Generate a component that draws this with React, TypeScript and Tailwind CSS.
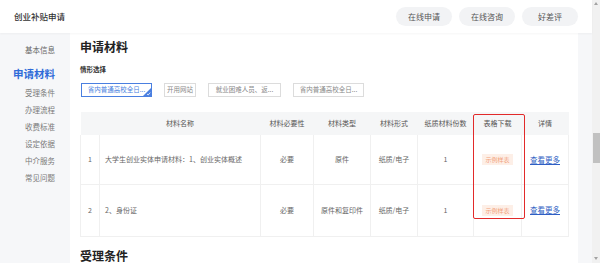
import React, { FC } from 'react';

const navItems = ['受理条件', '办理流程', '收费标准', '设定依据', '中介服务', '常见问题'];

const scenarios = [
  { label: '省内普通高校全日...', w: 'w-[71px]', active: true },
  { label: '开用网站', w: 'w-[32px]' },
  { label: '就业困难人员、返...', w: 'w-[73px]' },
  { label: '省内普通高校全日...', w: 'w-[71px]' },
];

const rows = [
  { no: '1', name: '大学生创业实体申请材料：1、创业实体概述', need: '必要', type: '原件', form: '纸质/电子', count: '1', h: 'h-[49px]' },
  { no: '2', name: '2、身份证', need: '必要', type: '原件和复印件', form: '纸质/电子', count: '1', h: 'h-[52px]' },
];

// top bar with the three pill buttons
const Header: FC = () => (
  <div className="h-[33px] bg-white flex items-center justify-between pl-[14px] pr-[14px] shadow-[0_1px_2px_rgba(0,0,0,0.04)] relative z-10">
    <span className="text-[8.5px] text-[#333] font-medium">创业补贴申请</span>
    <div className="flex items-center gap-[7px]">
      {['在线申请', '在线咨询', '好差评'].map((t) => (
        <div key={t} className="w-[56px] h-[19px] rounded-full bg-[#f2f3f5] flex items-center justify-center text-[8px] text-[#555]">
          {t}
        </div>
      ))}
    </div>
  </div>
);

const Sidebar: FC = () => (
  <div className="w-[70px] flex flex-col items-end pr-[15px] pt-[7.5px] text-[7.5px] text-[#7a7a7a] leading-[17px]">
    <span className="text-[#666]">基本信息</span>
    <span className="mt-[7px] mb-[2px] text-[10.5px] font-bold text-[#2f6bd8]">申请材料</span>
    {navItems.map((n) => (
      <span key={n}>{n}</span>
    ))}
  </div>
);

const MaterialsTable: FC = () => (
  <div className="relative">
    <table className="w-[488px] table-fixed border-collapse text-[7px] text-[#666]">
      <colgroup>
        <col className="w-[19px]" />
        <col className="w-[161px]" />
        <col className="w-[53px]" />
        <col className="w-[57px]" />
        <col className="w-[47px]" />
        <col className="w-[56px]" />
        <col className="w-[48px]" />
        <col className="w-[47px]" />
      </colgroup>
      <thead>
        <tr className="h-[23px] bg-[#f5f6f7] text-[#555]">
          <th className="font-normal" />
          <th className="font-normal">材料名称</th>
          <th className="font-normal">材料必要性</th>
          <th className="font-normal">材料类型</th>
          <th className="font-normal">材料形式</th>
          <th className="font-normal">纸质材料份数</th>
          <th className="font-normal">表格下载</th>
          <th className="font-normal">详情</th>
        </tr>
      </thead>
      <tbody>
        {rows.map((r) => (
          <tr key={r.no} className={`${r.h} border-b border-[#f0f0f0]`}>
            <td className="border-x border-[#f0f0f0] text-center">{r.no}</td>
            <td className="border-r border-[#f0f0f0] pl-[5px]">{r.name}</td>
            <td className="border-r border-[#f0f0f0] text-center">{r.need}</td>
            <td className="border-r border-[#f0f0f0] text-center">{r.type}</td>
            <td className="border-r border-[#f0f0f0] text-center">{r.form}</td>
            <td className="border-r border-[#f0f0f0] text-center">{r.count}</td>
            <td className="border-r border-[#f0f0f0] text-center">
              <span className="inline-block px-[3px] py-[1px] bg-[#fdefe7] text-[#f2a27c] text-[6px] leading-[9px]">示例样表</span>
            </td>
            <td className="border-r border-[#f0f0f0] text-center">
              <span className="text-[#2f5fc4] underline text-[7.5px]">查看更多</span>
            </td>
          </tr>
        ))}
      </tbody>
    </table>
    {/* highlight annotation */}
    <div className="absolute left-[393px] top-[2px] w-[52px] h-[105px] border-[1.5px] border-[#e22a2a] rounded-[2px] pointer-events-none" />
  </div>
);

const Scrollbar: FC = () => (
  <div className="w-[8px] h-full bg-[#f1f1f1] flex flex-col items-center">
    <div className="mt-[2px] w-0 h-0 border-x-[2.5px] border-x-transparent border-b-[3px] border-b-[#a3a3a3]" />
    <div className="h-[128px]" />
    <div className="w-[7px] h-[30px] bg-[#c1c1c1]" />
    <div className="flex-1" />
    <div className="mb-[3px] w-0 h-0 border-x-[2.5px] border-x-transparent border-t-[3px] border-t-[#a3a3a3]" />
  </div>
);

const App: FC = () => {
  return (
    <div className="w-[600px] h-[263px] overflow-hidden flex bg-[#f6f7f9] font-['Noto_Sans_CJK_SC','Noto_Sans',sans-serif]">
      <div className="flex-1 flex flex-col min-w-0">
        <Header />
        <div className="flex-1 flex min-h-0">
          <Sidebar />
          <div className="w-[508px] bg-white px-[10px] flex flex-col">
            <h2 className="mt-[6px] text-[12px] leading-[16px] font-bold text-[#222]">申请材料</h2>
            <div className="mt-[4px] h-px bg-[#e8e8e8]" />
            <div className="mt-[6px] text-[6.5px] leading-[9px] font-bold text-[#333]">情形选择</div>
            <div className="mt-[9px] flex items-center gap-[12px] pl-px">
              {scenarios.map((s, i) => (
                <div
                  key={i}
                  className={`${s.w} h-[14px] relative flex items-center justify-center text-[6.5px] border ${
                    s.active ? 'border-[#4a7fe0] text-[#4a7fe0]' : 'border-[#dcdcdc] text-[#888]'
                  }`}
                >
                  {s.label}
                  {s.active && (
                    <svg className="absolute right-0 bottom-0" width="8" height="8" viewBox="0 0 8 8">
                      <path d="M8 0 L8 8 L0 8 Z" fill="#4a7fe0" />
                      <path d="M4 6 L5.2 7 L7.2 4.6" stroke="#fff" strokeWidth="0.8" fill="none" />
                    </svg>
                  )}
                </div>
              ))}
            </div>
            <div className="mt-[15px]">
              <MaterialsTable />
            </div>
            <h2 className="mt-[11px] text-[12px] leading-[16px] font-bold text-[#222]">受理条件</h2>
          </div>
        </div>
      </div>
      <Scrollbar />
    </div>
  );
};

export default App;
